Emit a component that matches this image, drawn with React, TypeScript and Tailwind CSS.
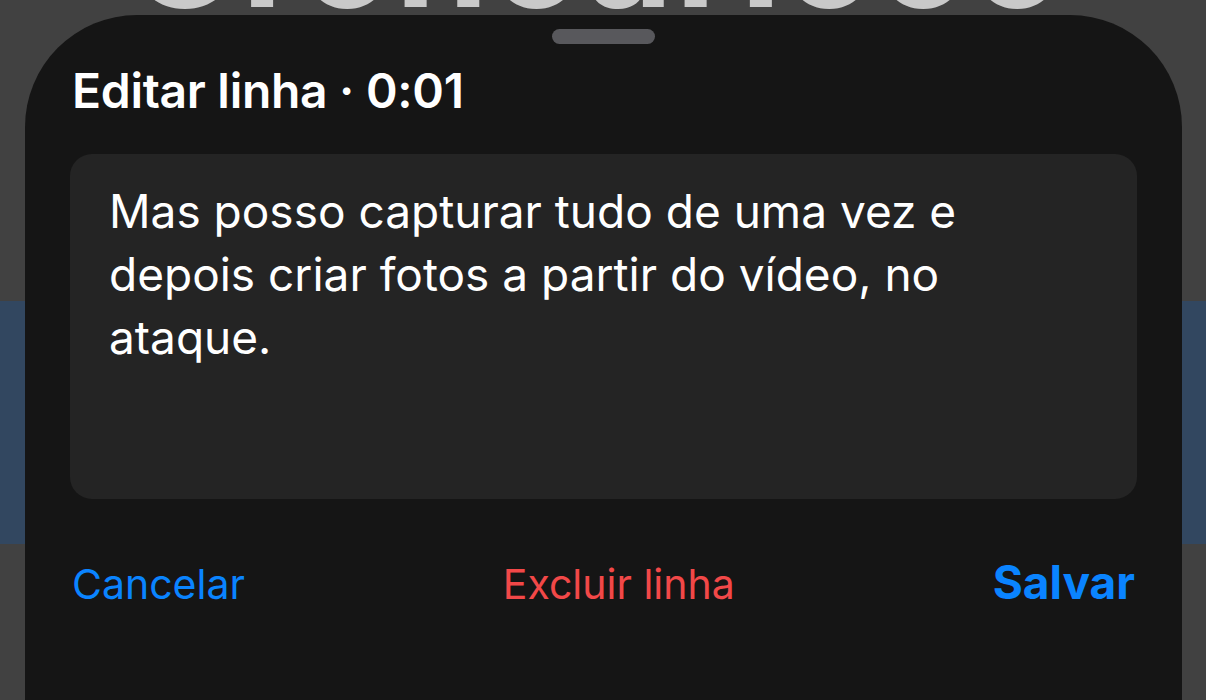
import React from "react";

export default function App() {
  const font = { fontFamily: "Inter, 'Noto Sans', sans-serif" };
  return (
    <div className="relative w-[1206px] h-[700px] overflow-hidden bg-[#414141]" style={font}>
      {/* background content */}
      <div className="absolute left-0 right-0 top-[301px] h-[243px] bg-[#324760]" />
      <div className="absolute left-[130px] top-[-122px] text-[150px] font-bold leading-none text-[#c9c9c9] whitespace-nowrap tracking-[2px]">
        Uronoarlooo
      </div>
      {/* sheet */}
      <div className="absolute left-[25px] top-[15px] w-[1157px] h-[720px] bg-[#151515] rounded-t-[112px] flex flex-col px-[45px]">
        <div className="self-center mt-[14px] w-[103px] h-[15px] rounded-full bg-[#58585c]" />
        <div className="mt-[17px] pl-[2px] text-[48px] font-semibold text-white leading-[60px] tracking-[-0.3px]">
          Editar linha · 0:01
        </div>
        <div className="mt-[33px] h-[345px] rounded-[22px] bg-[#242424] pl-[39px] pr-[80px] pt-[26px]">
          <p className="text-[46px] leading-[63px] text-white">
            Mas posso capturar tudo de uma vez e depois criar fotos a partir do vídeo, no ataque.
          </p>
        </div>
        <div className="mt-[58px] flex items-baseline justify-between px-[2px] leading-[50px]">
          <span className="text-[41px] text-[#0a84ff]">Cancelar</span>
          <span className="text-[41px] text-[#f24848]">Excluir linha</span>
          <span className="text-[46px] font-bold text-[#0a84ff]">Salvar</span>
        </div>
      </div>
    </div>
  );
}
